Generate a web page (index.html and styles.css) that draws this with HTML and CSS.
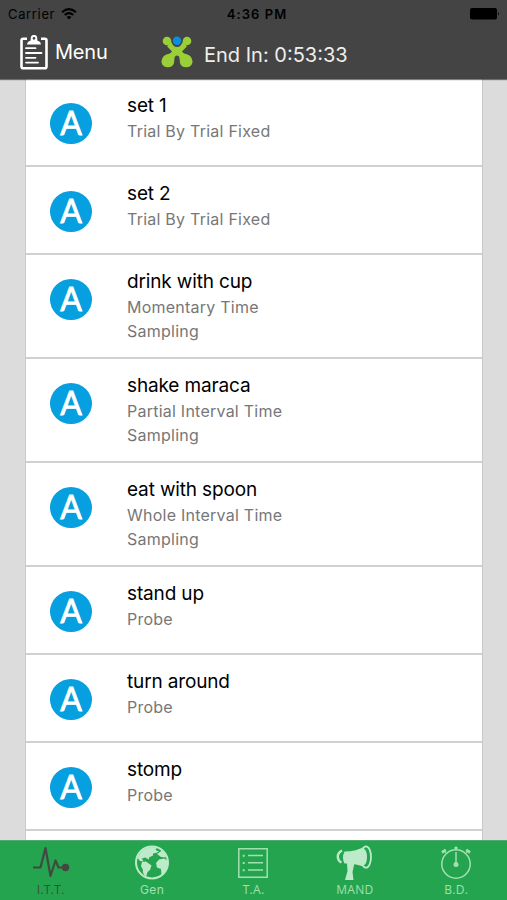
FILE: index.html
```html
<!DOCTYPE html>
<html lang="en">
<head>
<meta charset="utf-8">
<title>Session</title>
<link rel="stylesheet" href="styles.css">
</head>
<body>
<div class="app">
  <header class="header">
    <div class="status">
      <div class="carrier"><span>Carrier</span>
        <svg width="16" height="12" viewBox="0 0 16 12"><g fill="none" stroke="#000" stroke-width="2"><path d="M1 4.3Q8-2 15 4.3"/><path d="M3.7 7.1Q8 3.2 12.3 7.1"/></g><path d="M5.6 8.9Q8 7 10.4 8.9L8 11.5z"/></svg>
      </div>
      <div class="clock">4:36 PM</div>
      <svg class="battery" width="30" height="12" viewBox="0 0 30 12"><rect width="27" height="11.5" rx="2"/><path d="M28 4q2 1.8 0 3.6z"/></svg>
    </div>
    <div class="nav">
      <svg class="clipboard" width="28" height="35" viewBox="0 0 28 35"><g fill="none" stroke="#fff" stroke-width="2.6"><path d="M7 3.7H3.2Q1.5 3.7 1.5 5.5V31.5Q1.5 33.3 3.2 33.3H24.8Q26.5 33.3 26.5 31.5V5.5Q26.5 3.7 24.8 3.7H21"/><path stroke-width="1.8" stroke-linecap="round" d="M6 13.2H15.500M6 18H21.5M6 22.8H15.5M6 27.6H18"/></g><path fill="#fff" fill-rule="evenodd" d="M7 9.5Q7.2 6.7 10.7 5.5V3.2a3.3 3.3 0 0 1 6.6 0V5.5Q20.8 6.7 21 9.5zM14 1.9a1.4 1.4 0 1 0 0 2.8a1.4 1.4 0 0 0 0-2.8z"/></svg>
      <span class="menu">Menu</span>
      <svg class="logo" width="32" height="32" viewBox="0 0 32 32"><g fill="#9bcf38"><path d="M6 10.200L11 15.500L6.500 20L13 27Q12.500 19.500 16 19.500Q19.500 19.500 19 27L25.500 20L21 15.500L26 10.200L21.500 6Q20 11 16 11Q12 11 10.500 6z"/><circle cx="6" cy="5" r="4.300"/><circle cx="26" cy="5" r="4.300"/><path d="M9 17.500Q1 18.500.4 25.500A6.500 6.500 0 0 0 13 27Q14 21 12 17z"/><path d="M23 17.500Q31 18.500 31.600 25.500A6.500 6.500 0 0 1 19 27Q18 21 20 17z"/></g><circle cx="16" cy="4.700" r="4.200" fill="#078fe2"/></svg>
      <span class="timer">End In: 0:53:33</span>
    </div>
  </header>
  <main class="list">
    <article class="row"><div class="badge">A</div><div class="text"><h2>set 1</h2><p>Trial By Trial Fixed</p></div></article>
    <article class="row"><div class="badge">A</div><div class="text"><h2>set 2</h2><p>Trial By Trial Fixed</p></div></article>
    <article class="row tall"><div class="badge">A</div><div class="text"><h2>drink with cup</h2><p>Momentary Time<br>Sampling</p></div></article>
    <article class="row tall"><div class="badge">A</div><div class="text"><h2>shake maraca</h2><p>Partial Interval Time<br>Sampling</p></div></article>
    <article class="row tall"><div class="badge">A</div><div class="text"><h2>eat with spoon</h2><p>Whole Interval Time<br>Sampling</p></div></article>
    <article class="row"><div class="badge">A</div><div class="text"><h2>stand up</h2><p>Probe</p></div></article>
    <article class="row"><div class="badge">A</div><div class="text"><h2>turn around</h2><p>Probe</p></div></article>
    <article class="row"><div class="badge">A</div><div class="text"><h2>stomp</h2><p>Probe</p></div></article>
  </main>
  <nav class="tabs">
    <div class="tab active">
      <svg width="38" height="36" viewBox="0 0 38 36"><path d="M1 22.500H8.500L13.500 3L18.500 31L23.500 15.500L26.500 22.500H33" fill="none" stroke="#414942" stroke-width="2.200" stroke-linejoin="round"/><circle cx="33.500" cy="22.500" r="3.700" fill="#414942"/></svg>
      <span>I.T.T.</span>
    </div>
    <div class="tab gen">
      <svg width="36" height="36" viewBox="0 0 36 36"><circle cx="18" cy="17.500" r="16" fill="none" stroke="#bdebc9" stroke-width="2"/><path fill="#bdebc9" d="M5 10Q9 3 17 2L23 2.500L21.500 5L25 6.500L22 8L19 8.500L19 10.500L15 12.500L15 14.500L11 12.500L8 13.500L9.500 16.500L6 16L3.500 13zM8 17L12 16.500L17.500 20.500L16 25L13.500 27L12 32Q8 28 9 25L7 21zM25 14.500L30 13.500L33 15Q34 20 31 27L27.500 30L27 24L23 22.500L22 18zM23 9L28 5.500L31.500 10L32 12.500L27 12z"/></svg>
      <span>Gen</span>
    </div>
    <div class="tab">
      <svg width="36" height="36" viewBox="0 0 36 36"><g fill="none" stroke="#a1e0b0" stroke-width="1.500"><path d="M3.800 3.800H32.200V32.200H3.800z"/><path d="M13 10.500H28M13 17.800H28M13 25H28"/></g><path d="M7.700 9.700h2v2h-2zm0 7.200h2v2h-2zm0 7.300h2v2h-2z" fill="#a1e0b0"/></svg>
      <span>T.A.</span>
    </div>
    <div class="tab">
      <svg width="38" height="36" viewBox="0 0 38 36"><g fill="#bdebc9"><path d="M8.500 6.500Q20 6.500 30 1V23Q21 18 8.500 18.500Q5.500 12.500 8.500 6.500z"/><path d="M11 18L18.500 18L16.500 27L17.500 35H9L11.500 26z"/></g><ellipse cx="30" cy="12" rx="5" ry="10.700" fill="#25a44f" stroke="#bdebc9" stroke-width="1.800"/><path d="M27.300 3.500Q31 5 31 12Q31 19 27.300 20.500Q25 17 25 12Q25 7 27.300 3.500z" fill="#bdebc9"/><path d="M6 5.500Q1.500 8 1.800 12Q2 16 5.500 17.500" fill="none" stroke="#bdebc9" stroke-width="2.400"/></svg>
      <span>MAND</span>
    </div>
    <div class="tab">
      <svg width="36" height="36" viewBox="0 0 36 36"><g fill="none" stroke="#a1e0b0" stroke-width="1.500"><circle cx="18" cy="19" r="14.200"/><path d="M18 1.500V5M18 7V19"/></g><circle cx="18" cy="19.500" r="2.500" fill="#a1e0b0"/><path d="M16.500 2h3v2h-3z" fill="#a1e0b0"/><path d="M4 7.500L7.800 4.800M28.200 4.800L32 7.500" stroke="#a1e0b0" stroke-width="2.800"/><path d="M6 6L9 9M30 6L27 9" stroke="#a1e0b0"/></svg>
      <span>B.D.</span>
    </div>
  </nav>
</div>
</body>
</html>
```
FILE: styles.css
```css
* { box-sizing: border-box; }
body { margin: 0; font-family: Inter, "Liberation Sans", sans-serif; background: #dcdcdc; }
.app { height: 900px; display: flex; flex-direction: column; overflow: hidden; }
svg { display: block; flex: none; }
.header { height: 79px; flex: none; background: #444; box-shadow: 0 1px 1px rgba(0,0,0,.5); z-index: 1; }
.status { height: 28px; display: grid; grid-template-columns: 1fr auto 1fr; align-items: center; padding: 0 7px 0 8px; color: #000; font-size: 13px; }
.carrier { display: flex; align-items: center; gap: 6px; letter-spacing: .65px; }
.clock { font-weight: 600; letter-spacing: 1.1px; padding-left: 6px; }
.battery { justify-self: end; }
.nav { display: flex; height: 51px; padding-left: 20px; color: #fff; font-size: 20px; white-space: nowrap; }
.clipboard { margin-top: 7px; }
.menu { width: 52px; margin: 12px 0 0 7px; line-height: 24px; letter-spacing: -.2px; }
.logo { margin: 8px 0 0 54px; }
.timer { margin: 15px 0 0 11px; line-height: 24px; color: #eee; letter-spacing: 0; }
.list { flex: 1; min-height: 0; overflow: hidden; margin: 0 25px; width: 458px; border: solid #c9c9c9; border-width: 0 1px; background: #fff; }
.row { height: 88px; display: flex; align-items: flex-start; border-bottom: 2px solid #d0d0d0; padding: 14px 0 0 24px; }
.row.tall { height: 104px; }
.row:last-child { box-shadow: 0 0 0 0 #fff; }
.badge { width: 42px; height: 41px; margin-top: 10px; border-radius: 50%; background: #069fdf; color: #fff; font: 400 32px/40px Lato, sans-serif; -webkit-text-stroke: .8px #fff; text-align: center; flex: none; }
.text { margin-left: 35px; }
h2 { margin: 0; font-size: 19px; font-weight: 400; line-height: 25px; color: #000; letter-spacing: -.15px; }
p { margin: 1px 0 0; font-size: 16px; line-height: 24.300px; color: #777; letter-spacing: .24px; }
.tabs { height: 60px; flex: none; display: grid; grid-template-columns: repeat(5, 1fr); background: #25a44f; border-top: 1px solid #4dac6b; z-index: 1; }
.tab { display: flex; flex-direction: column; align-items: center; padding-top: 4px; color: #a1e0b0; font: 12px/16px "Open Sans", sans-serif; letter-spacing: .3px; }
.tab span { margin-top: 1px; }
.tab.active { color: #414942; }
.gen { font-family: Inter, sans-serif; }
```
